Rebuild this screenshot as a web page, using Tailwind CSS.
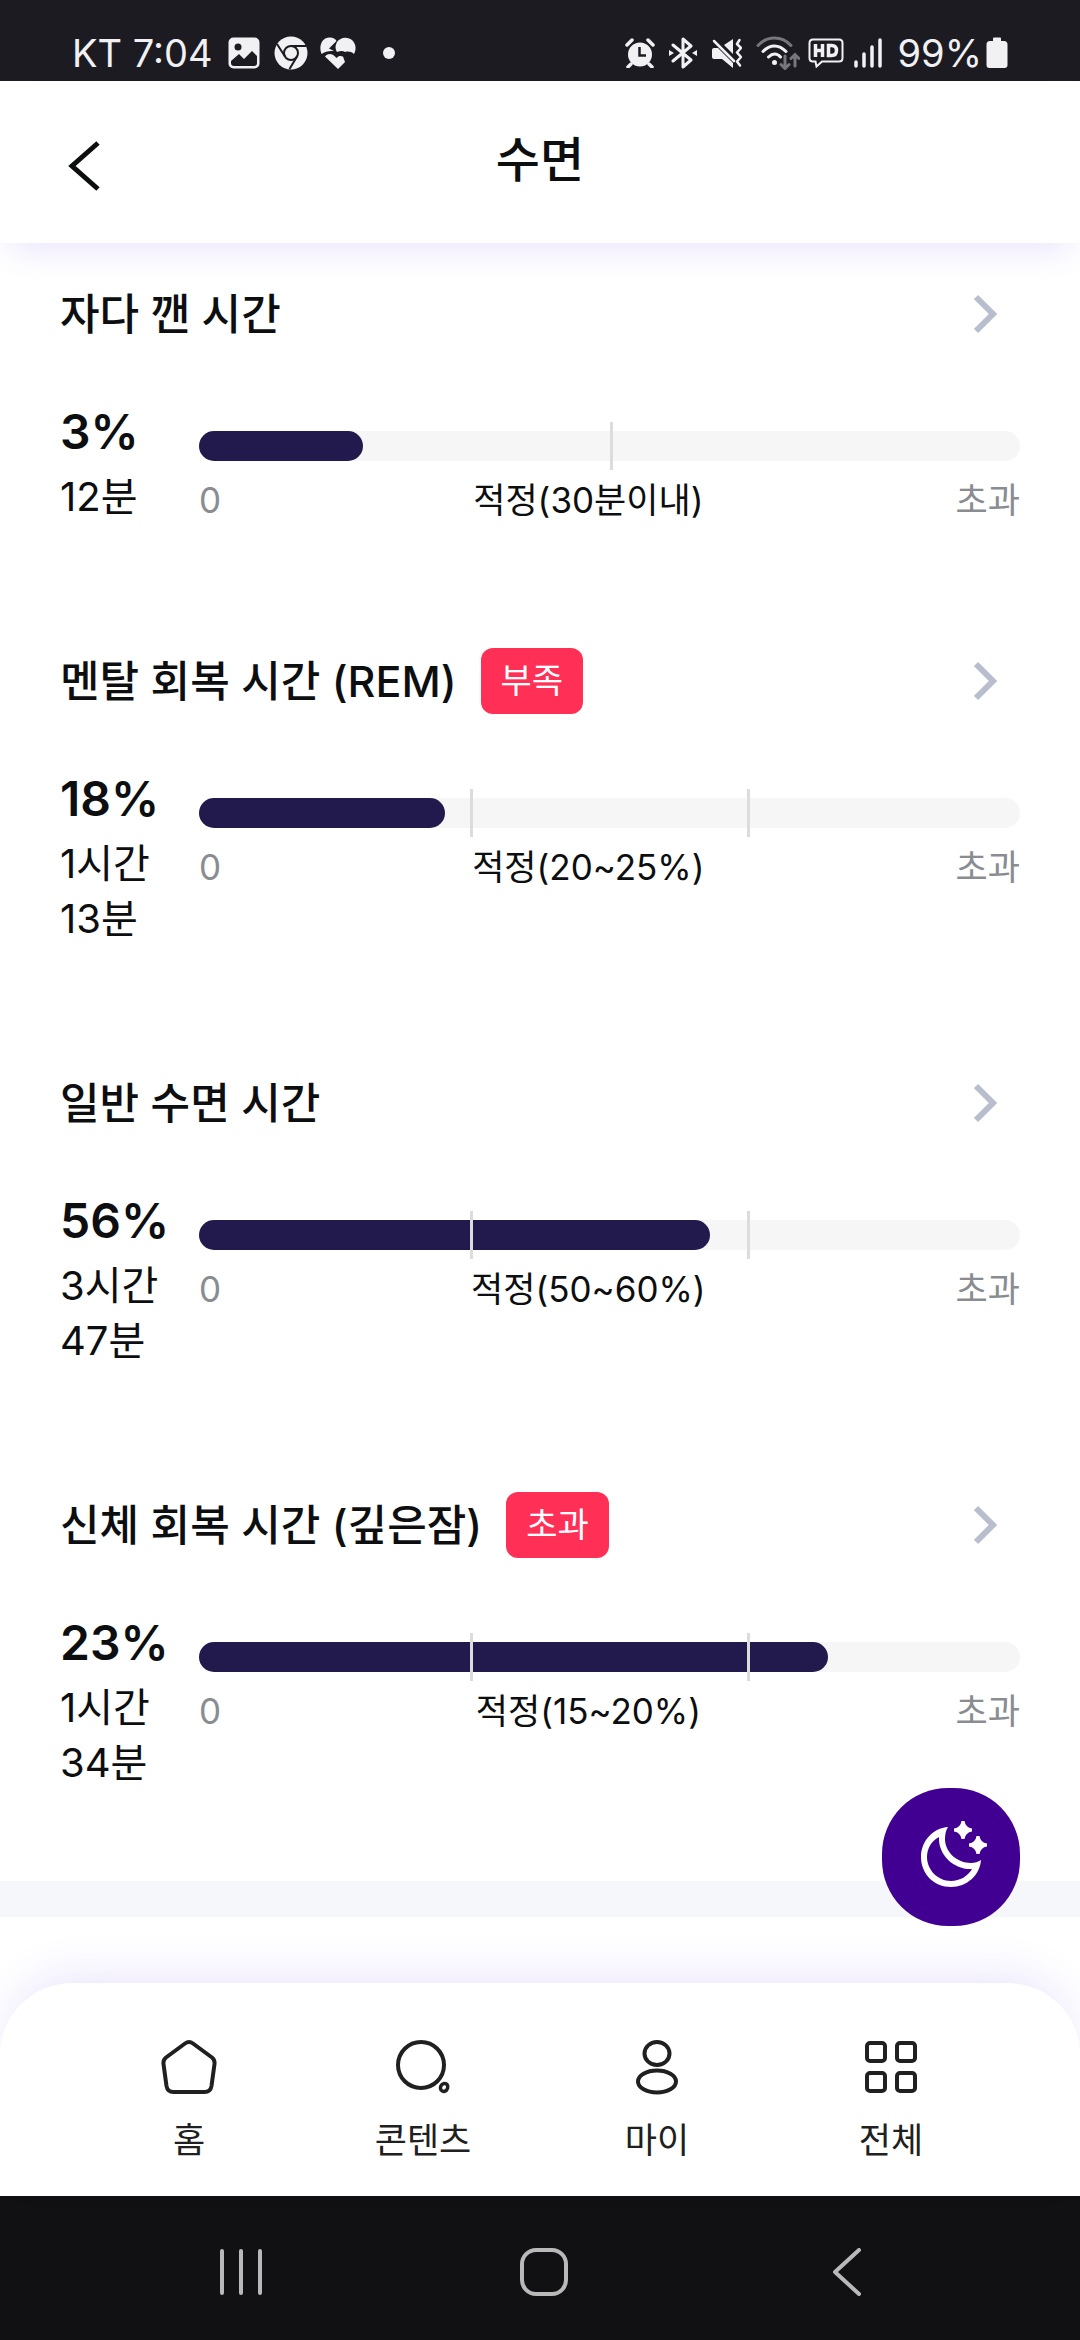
<!DOCTYPE html>
<html lang="ko">
<head>
    <meta charset="UTF-8">
    <meta name="viewport" content="width=device-width, initial-scale=1.0">
    <title>수면</title>
    <script src="https://cdn.jsdelivr.net/npm/@tailwindcss/browser@4"></script>
</head>
<body class="min-h-screen flex flex-col overflow-x-hidden bg-white text-[#0d0e10] font-['Inter','Noto_Sans_CJK_KR',sans-serif]">

    <!-- status bar -->
    <div class="h-[81px] pt-6 px-[72px] flex items-center justify-between bg-[#1c1b22] text-[#f1f1f3] text-[38px] leading-none">
        <div class="flex items-center">
            <span>KT 7:04</span>
            <svg class="w-8 h-8 ml-4" viewBox="0 0 32 32">
                <rect x="0.5" y="0.5" width="31" height="31" rx="5" fill="currentColor"/>
                <circle cx="10" cy="10" r="3.5" fill="#1c1b22"/>
                <path d="M3 24l8-7 5 5 8-8 5 5v7a3 3 0 0 1-3 3H6a3 3 0 0 1-3-3z" fill="#1c1b22"/>
            </svg>
            <svg class="w-[34px] h-[34px] ml-[14px]" viewBox="0 0 34 34">
                <circle cx="17" cy="17" r="16.5" fill="currentColor"/>
                <g fill="none" stroke="#1c1b22" stroke-width="2">
                    <circle cx="17" cy="17" r="7"/>
                    <path d="M17 10h15M11 20.500L3 8M23 20.500L15.500 33"/>
                </g>
            </svg>
            <svg class="w-9 h-8 ml-3" viewBox="0 0 36 32">
                <path d="M18 32L5 19.500c3-3.500 7-3 9.500-.5l2 2c2-2.500 4-2.500 6.500-1.500L25 25z" fill="currentColor"/>
                <path d="M1.500 17C-2 8 3 0 10 .5c3 0 5.500 1.500 6.500 3.500L9 11.500l5 2.500C9 13.500 5 14.500 1.500 17z" fill="currentColor"/>
                <path d="M17 5c3-5 11-6 15.500-1.500 3.500 3.500 4 9 1.500 13.500-3-2.500-6-3-9-2-2.500-1.500-5-1-8 0-2-3-2-6 0-10z" fill="currentColor"/>
            </svg>
            <span class="w-3 h-3 ml-[27px] rounded-full bg-[#f1f1f3]"></span>
        </div>
        <div class="flex items-center">
            <svg class="w-[30px] h-[30px]" viewBox="0 0 30 30">
                <circle cx="15" cy="16.500" r="12" fill="currentColor"/>
                <path d="M2 7l5-5M28 7l-5-5M6 26l-3 3M24 26l3 3" stroke="currentColor" stroke-width="3.500" stroke-linecap="round"/>
                <path d="M14.500 9v8.500H21" fill="none" stroke="#1c1b22" stroke-width="2.500"/>
            </svg>
            <svg class="w-7 h-8 ml-[14px]" viewBox="0 0 28 32">
                <path d="M4 8l18 15-8 7V2l8 7L4 24" fill="none" stroke="currentColor" stroke-width="3" stroke-linejoin="round" stroke-linecap="round"/>
                <path d="M0 13l5 3-5 3zM28 13l-5 3 5 3z" fill="currentColor"/>
            </svg>
            <svg class="w-[30px] h-[30px] ml-[15px]" viewBox="0 0 30 30">
                <path d="M0 12q0-2 2-2h4l15 15v5l-11-9H2q-2 0-2-2zM12 7l9-6v15z" fill="currentColor"/>
                <path d="M2 3l20 20" stroke="currentColor" stroke-width="2.500" stroke-linecap="round"/>
                <path d="M27.500 2l-2.500 4 4 4-4 4.500 4 4.500-4 4.500 3 4" fill="none" stroke="currentColor" stroke-width="2.500" stroke-linecap="round" stroke-linejoin="round"/>
            </svg>
            <svg class="w-11 h-[34px] ml-[14px]" viewBox="0 0 44 34" fill="none" stroke-width="3" stroke-linecap="round">
                <path d="M2 9.500c9-10 24-10 33 0" stroke="#77767c"/>
                <path d="M7 15.500c7-7.500 16-7.500 23 0M12.500 21c4-4 8.500-4 12 0" stroke="currentColor"/>
                <circle cx="18.500" cy="26.500" r="2.500" fill="currentColor"/>
                <path d="M29 20v12M25 28.500l4 4 4-4M39 30V19M35 22.500l4-4 4 4" stroke="#77767c"/>
            </svg>
            <svg class="w-9 h-[30px] ml-2" viewBox="0 0 36 30" fill="none" stroke="currentColor">
                <path d="M5 1.500h26q3.500 0 3.500 3.500v15q0 3.500-3.500 3.500H14L8.500 28.500 7.500 23.500H5Q1.500 23.500 1.500 20V5Q1.500 1.500 5 1.500z" stroke-width="2"/>
                <path d="M7.500 6v13M14.500 6v13M7.500 12.500h7M20.500 7.500v10h3q5 0 5-5t-5-5z" stroke-width="3.500"/>
            </svg>
            <svg class="w-7 h-[30px] ml-2.5" viewBox="0 0 28 30" stroke="currentColor" stroke-width="3.500" stroke-linecap="round">
                <path d="M2 24v4M10 16v12M18 9v19M26 2v26"/>
            </svg>
            <span class="ml-4">99%</span>
            <svg class="w-[22px] h-8 ml-1" viewBox="0 0 22 32">
                <path d="M7 4V1.500Q7 .5 8 .5h6q1 0 1 1V4h3q3.500 0 3.500 3.500V28q0 3-3 3h-15q-3 0-3-3V7.500Q.5 4 4 4z" fill="currentColor"/>
            </svg>
        </div>
    </div>

    <header class="relative z-10 h-[162px] px-[60px] pb-1 grid grid-cols-3 items-center bg-white shadow-[0_18px_30px_-10px_rgba(90,50,230,0.12)]">
        <button type="button" aria-label="뒤로" class="justify-self-start pl-1.5 pt-3">
            <svg class="w-[36px] h-[52px]" viewBox="0 0 36 52" fill="none" stroke="currentColor" stroke-width="5">
                <path d="M32 3L6 26l26 23"/>
            </svg>
        </button>
        <h1 class="text-[48px] leading-[60px] font-medium text-center">수면</h1>
    </header>

    <main class="flex-1">
        <div class="px-[60px] pt-[38px] pb-[91px] flex flex-col gap-[124px]">

            <section>
                <a href="#" class="h-[66px] pr-[22px] flex items-center">
                    <h2 class="text-[43px] font-medium">자다 깬 시간</h2>
                    <svg class="w-6 h-10 ml-auto" viewBox="0 0 24 40" fill="none" stroke="#b8becd" stroke-width="6"><path d="M2 3l17 17L2 37"/></svg>
                </a>
                <div class="mt-14 flex">
                    <div class="w-[139px] shrink-0 text-[40px] leading-[55px]">
                        <p class="mb-2 text-[48px] leading-[58px] font-semibold">3%</p>
                        <p>12분</p>
                    </div>
                    <div class="flex-1 pt-7">
                        <div class="relative h-[30px] rounded-full bg-[#f6f6f6]">
                            <div class="h-full rounded-full bg-[#22194d]" style="width: 20%"></div>
                            <span class="absolute -top-[9px] -bottom-[9px] w-[3px] bg-[#dcdcdc]" style="left: 50%"></span>
                        </div>
                        <div class="mt-4 flex justify-between text-[35px] leading-[46px]">
                            <span class="text-[#898c90]">0</span>
                            <span>적정(30분이내)</span>
                            <span class="text-[#898c90]">초과</span>
                        </div>
                    </div>
                </div>
            </section>

            <section>
                <a href="#" class="h-[66px] pr-[22px] flex items-center">
                    <h2 class="text-[43px] font-medium">멘탈 회복 시간 (REM)</h2>
                    <span class="ml-6 px-5 rounded-xl bg-[#ff2f55] text-white text-[34px] leading-[66px]">부족</span>
                    <svg class="w-6 h-10 ml-auto" viewBox="0 0 24 40" fill="none" stroke="#b8becd" stroke-width="6"><path d="M2 3l17 17L2 37"/></svg>
                </a>
                <div class="mt-14 flex">
                    <div class="w-[139px] shrink-0 text-[40px] leading-[55px]">
                        <p class="mb-2 text-[48px] leading-[58px] font-semibold">18%</p>
                        <p>1시간<br>13분</p>
                    </div>
                    <div class="flex-1 pt-7">
                        <div class="relative h-[30px] rounded-full bg-[#f6f6f6]">
                            <div class="h-full rounded-full bg-[#22194d]" style="width: 30%"></div>
                            <span class="absolute -top-[9px] -bottom-[9px] w-[3px] bg-[#dcdcdc]" style="left: 33%"></span>
                            <span class="absolute -top-[9px] -bottom-[9px] w-[3px] bg-[#dcdcdc]" style="left: 66.7%"></span>
                        </div>
                        <div class="mt-4 flex justify-between text-[35px] leading-[46px]">
                            <span class="text-[#898c90]">0</span>
                            <span>적정(20~25%)</span>
                            <span class="text-[#898c90]">초과</span>
                        </div>
                    </div>
                </div>
            </section>

            <section>
                <a href="#" class="h-[66px] pr-[22px] flex items-center">
                    <h2 class="text-[43px] font-medium">일반 수면 시간</h2>
                    <svg class="w-6 h-10 ml-auto" viewBox="0 0 24 40" fill="none" stroke="#b8becd" stroke-width="6"><path d="M2 3l17 17L2 37"/></svg>
                </a>
                <div class="mt-14 flex">
                    <div class="w-[139px] shrink-0 text-[40px] leading-[55px]">
                        <p class="mb-2 text-[48px] leading-[58px] font-semibold">56%</p>
                        <p>3시간<br>47분</p>
                    </div>
                    <div class="flex-1 pt-7">
                        <div class="relative h-[30px] rounded-full bg-[#f6f6f6]">
                            <div class="h-full rounded-full bg-[#22194d]" style="width: 62.2%"></div>
                            <span class="absolute -top-[9px] -bottom-[9px] w-[3px] bg-[#dcdcdc]" style="left: 33%"></span>
                            <span class="absolute -top-[9px] -bottom-[9px] w-[3px] bg-[#dcdcdc]" style="left: 66.7%"></span>
                        </div>
                        <div class="mt-4 flex justify-between text-[35px] leading-[46px]">
                            <span class="text-[#898c90]">0</span>
                            <span>적정(50~60%)</span>
                            <span class="text-[#898c90]">초과</span>
                        </div>
                    </div>
                </div>
            </section>

            <section>
                <a href="#" class="h-[66px] pr-[22px] flex items-center">
                    <h2 class="text-[43px] font-medium">신체 회복 시간 (깊은잠)</h2>
                    <span class="ml-6 px-5 rounded-xl bg-[#ff2f55] text-white text-[34px] leading-[66px]">초과</span>
                    <svg class="w-6 h-10 ml-auto" viewBox="0 0 24 40" fill="none" stroke="#b8becd" stroke-width="6"><path d="M2 3l17 17L2 37"/></svg>
                </a>
                <div class="mt-14 flex">
                    <div class="w-[139px] shrink-0 text-[40px] leading-[55px]">
                        <p class="mb-2 text-[48px] leading-[58px] font-semibold">23%</p>
                        <p>1시간<br>34분</p>
                    </div>
                    <div class="flex-1 pt-7">
                        <div class="relative h-[30px] rounded-full bg-[#f6f6f6]">
                            <div class="h-full rounded-full bg-[#22194d]" style="width: 76.6%"></div>
                            <span class="absolute -top-[9px] -bottom-[9px] w-[3px] bg-[#dcdcdc]" style="left: 33%"></span>
                            <span class="absolute -top-[9px] -bottom-[9px] w-[3px] bg-[#dcdcdc]" style="left: 66.7%"></span>
                        </div>
                        <div class="mt-4 flex justify-between text-[35px] leading-[46px]">
                            <span class="text-[#898c90]">0</span>
                            <span>적정(15~20%)</span>
                            <span class="text-[#898c90]">초과</span>
                        </div>
                    </div>
                </div>
            </section>
        </div>

        <div class="h-9 bg-[#f5f7fa]"></div>
        <div class="h-[66px]"></div>
    </main>

    <!-- bottom tabs -->
    <nav class="relative h-[213px] px-[72px] pt-14 grid grid-cols-4 rounded-t-[72px] bg-white text-[#202020] text-[35px] leading-[50px] shadow-[0_-18px_44px_-10px_rgba(90,50,230,0.12)]">
        <a href="#" class="flex flex-col items-center gap-5">
            <svg class="w-14 h-14" viewBox="0 0 56 56" fill="none" stroke="currentColor" stroke-width="4" stroke-linejoin="round">
                <path d="M24 4.500Q28 1.500 32 4.500L51 18.500Q54 21 53.500 25L50.500 47Q49.500 53 43.500 53H12.500Q6.500 53 5.500 47L2.500 25Q2 21 5 18.500z"/>
            </svg>
            <span>홈</span>
        </a>
        <a href="#" class="flex flex-col items-center gap-5">
            <svg class="w-14 h-14" viewBox="0 0 56 56" fill="none" stroke="currentColor" stroke-width="4">
                <circle cx="26" cy="26" r="23"/>
                <path d="M49 44.500c3-.5 4.500 2 3.500 5-1 3-4.500 4-6.500 1.500-1.500-2.500 0-6 3-6.500z" stroke-width="3.500"/>
            </svg>
            <span>콘텐츠</span>
        </a>
        <a href="#" class="flex flex-col items-center gap-5">
            <svg class="w-14 h-14" viewBox="0 0 56 56" fill="none" stroke="currentColor" stroke-width="4">
                <ellipse cx="28" cy="14.500" rx="12.500" ry="11.500"/>
                <ellipse cx="28" cy="42.500" rx="19" ry="11"/>
            </svg>
            <span>마이</span>
        </a>
        <a href="#" class="flex flex-col items-center gap-5">
            <svg class="w-14 h-14" viewBox="0 0 56 56" fill="none" stroke="currentColor" stroke-width="4">
                <rect x="4" y="4" width="18" height="18" rx="3"/>
                <rect x="34" y="4" width="18" height="18" rx="3"/>
                <rect x="4" y="34" width="18" height="18" rx="3"/>
                <rect x="34" y="34" width="18" height="18" rx="3"/>
            </svg>
            <span>전체</span>
        </a>
        <button type="button" aria-label="수면 측정" class="absolute right-[60px] bottom-full mb-[57px] w-[138px] h-[138px] rounded-[66px] flex items-center justify-center bg-[#420093] text-white">
            <svg class="w-[72px] h-[72px]" viewBox="0 0 72 72" fill="currentColor">
                <path fill-rule="evenodd" d="M33 6C18 7 6 20 6 36c0 17 13 30 30 30 16 0 29-12 30-27-3 2-6 3-10 3-14 0-26-11-26-24 0-5 1-9 3-12zM24 16C16 20 12 28 12 36c0 13 11 24 24 24 9 0 17-5 21-12C39 49 23 34 24 16z"/>
                <path d="M46.500 0h3q1 6.500 7.500 7.500v3q-6.500 1-7.500 7.500h-3q-1-6.500-7.500-7.500v-3Q45.500 6.500 46.500 0zM61.500 15h3q1 6.500 7.500 7.500v3q-6.500 1-7.500 7.500h-3q-1-6.500-7.500-7.500v-3q6.500-1 7.500-7.500z"/>
            </svg>
        </button>
    </nav>

    <!-- system navigation -->
    <div class="h-36 pt-2 pl-[90px] pr-[82px] flex items-center justify-around bg-[#111113] text-[#b9b9b9]">
        <button type="button" aria-label="최근 앱">
            <svg class="w-12 h-12" viewBox="0 0 48 48" stroke="currentColor" stroke-width="4" stroke-linecap="round"><path d="M5 3v42M24 3v42M43 3v42"/></svg>
        </button>
        <button type="button" aria-label="홈 화면">
            <svg class="w-12 h-12" viewBox="0 0 48 48" fill="none" stroke="currentColor" stroke-width="4"><rect x="2" y="2" width="44" height="44" rx="14"/></svg>
        </button>
        <button type="button" aria-label="이전 화면">
            <svg class="w-12 h-12" viewBox="0 0 48 48" fill="none" stroke="currentColor" stroke-width="4" stroke-linecap="round" stroke-linejoin="round"><path d="M36 2L12 24l24 22"/></svg>
        </button>
    </div>

</body>
</html>
